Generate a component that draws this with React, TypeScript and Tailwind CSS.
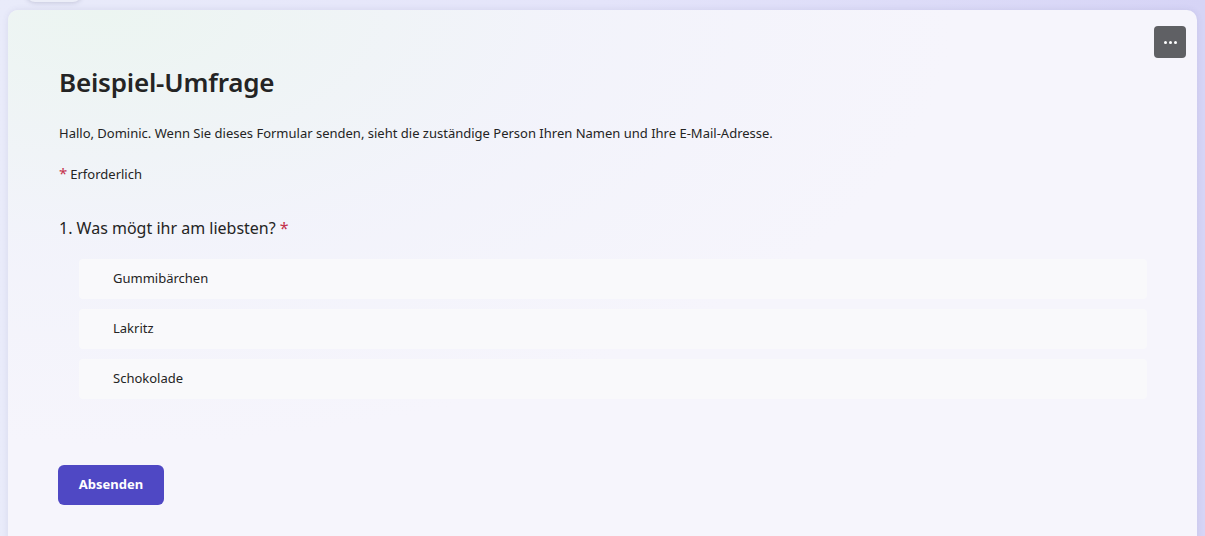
const options = ['Gummibärchen', 'Lakritz', 'Schokolade']

export default function App() {
  return (
    <div className="relative h-[536px] w-[1205px] overflow-hidden bg-gradient-to-r from-[#e9ebfa] via-[#e4e4fa] to-[#d6d4f6] font-['Noto_Sans',sans-serif] text-[#242424]">
      {/* shadow of a pill above the card */}
      <div className="absolute left-[26px] top-[-16px] h-[18px] w-[56px] rounded-full bg-[#eceef8] shadow-[0_1px_4px_rgba(90,90,130,0.25)]" />

      <div className="ml-[8px] mt-[10px] h-[560px] w-[1189px] rounded-[10px] bg-[#f6f5fc] shadow-[0_0_6px_rgba(80,80,140,0.12)]">
        <div className="relative h-full w-full rounded-[10px] bg-[radial-gradient(ellipse_at_8%_0%,#ecf5f1_0%,rgba(240,242,250,0.6)_30%,transparent_55%)]">
          <button className="absolute right-[11px] top-[16px] flex h-[32px] w-[32px] items-center justify-center gap-[2px] rounded-[4px] bg-[#5f6064]">
            <span className="h-[3px] w-[3px] rounded-full bg-white" />
            <span className="h-[3px] w-[3px] rounded-full bg-white" />
            <span className="h-[3px] w-[3px] rounded-full bg-white" />
          </button>

          <div className="px-[51px] pt-[54px]">
            <h1 className="text-[26px] font-semibold leading-[36px] tracking-[-0.2px]">Beispiel-Umfrage</h1>

            <p className="mt-[23px] text-[13px] leading-[20px]">
              Hallo, Dominic. Wenn Sie dieses Formular senden, sieht die zuständige Person Ihren Namen und Ihre E-Mail-Adresse.
            </p>

            <p className="mt-[20px] text-[13px] leading-[20px]">
              <span className="mr-[3px] text-[15px] leading-[20px] text-[#c4314b]">*</span>Erforderlich
            </p>

            <p className="mt-[32px] text-[16px] leading-[24px]">
              1. Was mögt ihr am liebsten? <span className="text-[#c4314b]">*</span>
            </p>

            <div className="ml-[20px] mr-[-1px] mt-[19px] flex flex-col gap-[10px]">
              {options.map((o) => (
                <div key={o} className="flex h-[40px] items-center rounded-[4px] bg-[#f9f9fb] pl-[34px] text-[13px]">
                  {o}
                </div>
              ))}
            </div>

            <button className="-ml-px mt-[66px] h-[40px] w-[106px] rounded-[6px] bg-[#4f48c4] text-[13px] font-bold text-white">
              Absenden
            </button>
          </div>
        </div>
      </div>
    </div>
  )
}
